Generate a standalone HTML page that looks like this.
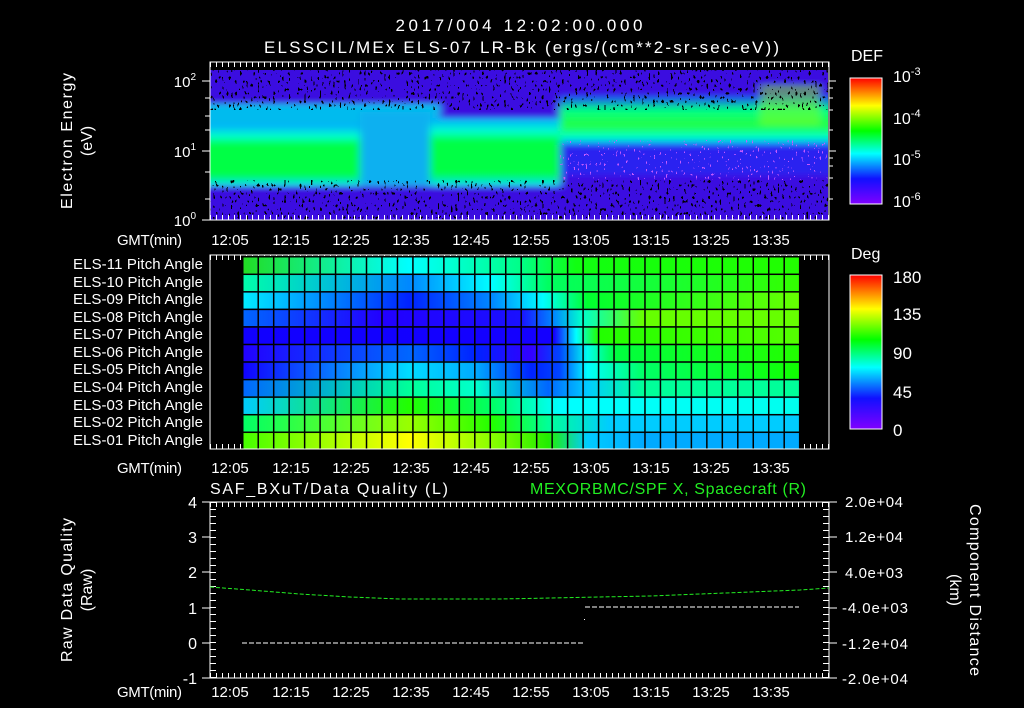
<!DOCTYPE html>
<html><head><meta charset="utf-8"><style>
html,body{margin:0;padding:0;background:#000;}
svg{display:block;font-family:"Liberation Sans",sans-serif;}
text{fill:#fff;}
</style></head><body>
<svg width="1024" height="708" viewBox="0 0 1024 708" xmlns="http://www.w3.org/2000/svg" font-size="15">
<defs>
<clipPath id="spc"><rect x="210" y="70" width="618" height="150"/></clipPath>
<filter id="bl" x="-5%" y="-5%" width="110%" height="110%"><feGaussianBlur stdDeviation="4 3"/></filter>
<filter id="spk" x="0" y="0" width="100%" height="100%">
<feTurbulence type="fractalNoise" baseFrequency="0.45 0.25" numOctaves="1" seed="3"/>
<feColorMatrix type="matrix" values="0 0 0 0 0  0 0 0 0 0  0 0 0 0 0  1.6 0 0 0 -0.55"/>
<feComponentTransfer><feFuncA type="discrete" tableValues="0 1"/></feComponentTransfer>
</filter>
<filter id="spk2" x="0" y="0" width="100%" height="100%">
<feTurbulence type="fractalNoise" baseFrequency="0.5 0.3" numOctaves="1" seed="9"/>
<feColorMatrix type="matrix" values="0 0 0 0 0.55  0 0 0 0 0.1  0 0 0 0 1  1.6 0 0 0 -0.6"/>
<feComponentTransfer><feFuncA type="discrete" tableValues="0 1"/></feComponentTransfer>
</filter>
<linearGradient id="cb1" x1="0" y1="1" x2="0" y2="0">
<stop offset="0" stop-color="#8000ff"/><stop offset="0.2" stop-color="#1010ff"/><stop offset="0.4" stop-color="#00ffff"/><stop offset="0.58" stop-color="#00ff00"/><stop offset="0.78" stop-color="#ffff00"/><stop offset="1" stop-color="#ff0000"/>
</linearGradient>
<linearGradient id="sbL" x1="0" y1="0" x2="0" y2="1">
<stop offset="0" stop-color="#00aaff"/><stop offset="0.2" stop-color="#00ffcc"/><stop offset="0.35" stop-color="#00ff44"/><stop offset="0.8" stop-color="#00ff44"/><stop offset="1" stop-color="#00ddff"/>
</linearGradient>
<linearGradient id="sbR" x1="0" y1="0" x2="0" y2="1">
<stop offset="0" stop-color="#2030ff"/><stop offset="0.3" stop-color="#00ff88"/><stop offset="0.6" stop-color="#22ff44"/><stop offset="0.85" stop-color="#00ffcc"/><stop offset="1" stop-color="#0080ff"/>
</linearGradient>
<pattern id="grid" x="242" y="256" width="15.47" height="17.55" patternUnits="userSpaceOnUse"><rect width="1.5" height="17.55" fill="#000"/><rect width="15.47" height="1.5" fill="#000"/></pattern>
<linearGradient id="r11"><stop offset="0" stop-color="#22dd22"/><stop offset="0.3" stop-color="#00ffff"/><stop offset="0.5" stop-color="#00ff88"/><stop offset="0.6" stop-color="#11ff11"/><stop offset="1" stop-color="#22ff00"/></linearGradient>
<linearGradient id="r10"><stop offset="0" stop-color="#00ffaa"/><stop offset="0.3" stop-color="#0088ff"/><stop offset="0.45" stop-color="#00ffff"/><stop offset="0.55" stop-color="#00ff60"/><stop offset="1" stop-color="#33ff00"/></linearGradient>
<linearGradient id="r9"><stop offset="0" stop-color="#00eeff"/><stop offset="0.3" stop-color="#0022ff"/><stop offset="0.45" stop-color="#0088ff"/><stop offset="0.54" stop-color="#00ffff"/><stop offset="0.62" stop-color="#00ff30"/><stop offset="1" stop-color="#66ff00"/></linearGradient>
<linearGradient id="r8"><stop offset="0" stop-color="#0066ff"/><stop offset="0.25" stop-color="#2200ff"/><stop offset="0.5" stop-color="#1a10ff"/><stop offset="0.56" stop-color="#0088ff"/><stop offset="0.61" stop-color="#00ffcc"/><stop offset="0.72" stop-color="#66ff00"/><stop offset="1" stop-color="#66ff00"/></linearGradient>
<linearGradient id="r7"><stop offset="0" stop-color="#1100ff"/><stop offset="0.56" stop-color="#1400ff"/><stop offset="0.6" stop-color="#00ffff"/><stop offset="0.64" stop-color="#22ff00"/><stop offset="1" stop-color="#55ff00"/></linearGradient>
<linearGradient id="r6"><stop offset="0" stop-color="#2200ff"/><stop offset="0.3" stop-color="#0066ff"/><stop offset="0.42" stop-color="#0022ff"/><stop offset="0.52" stop-color="#3300ff"/><stop offset="0.57" stop-color="#0044ff"/><stop offset="0.62" stop-color="#00ffee"/><stop offset="0.67" stop-color="#00ff40"/><stop offset="1" stop-color="#22ff00"/></linearGradient>
<linearGradient id="r5"><stop offset="0" stop-color="#1100ff"/><stop offset="0.3" stop-color="#00ddff"/><stop offset="0.42" stop-color="#00aaff"/><stop offset="0.52" stop-color="#0022ff"/><stop offset="0.57" stop-color="#0044ff"/><stop offset="0.62" stop-color="#00ffff"/><stop offset="0.72" stop-color="#00ff66"/><stop offset="1" stop-color="#11ff00"/></linearGradient>
<linearGradient id="r4"><stop offset="0" stop-color="#0066ff"/><stop offset="0.3" stop-color="#00ff99"/><stop offset="0.42" stop-color="#00ffcc"/><stop offset="0.55" stop-color="#0066ff"/><stop offset="0.62" stop-color="#00ccff"/><stop offset="0.72" stop-color="#00ff99"/><stop offset="1" stop-color="#00ff99"/></linearGradient>
<linearGradient id="r3"><stop offset="0" stop-color="#00ccff"/><stop offset="0.3" stop-color="#22ff00"/><stop offset="0.45" stop-color="#00ff66"/><stop offset="0.57" stop-color="#00ffff"/><stop offset="1" stop-color="#00ffee"/></linearGradient>
<linearGradient id="r2"><stop offset="0" stop-color="#00ff66"/><stop offset="0.3" stop-color="#99ff00"/><stop offset="0.45" stop-color="#22ff00"/><stop offset="0.55" stop-color="#00ff99"/><stop offset="0.66" stop-color="#00ccff"/><stop offset="1" stop-color="#00ccff"/></linearGradient>
<linearGradient id="r1"><stop offset="0" stop-color="#44ff00"/><stop offset="0.3" stop-color="#ffff00"/><stop offset="0.45" stop-color="#88ff00"/><stop offset="0.55" stop-color="#22ee00"/><stop offset="0.62" stop-color="#00ccff"/><stop offset="0.72" stop-color="#00aaff"/><stop offset="1" stop-color="#00aaff"/></linearGradient>
</defs>

<!-- titles -->
<text x="519" y="31" text-anchor="middle" font-size="17" textLength="247" lengthAdjust="spacing">2017/004 12:02:00.000</text>
<text x="264" y="53" font-size="17" textLength="515" lengthAdjust="spacing">ELSSCIL/MEx ELS-07 LR-Bk  (ergs/(cm**2-sr-sec-eV))</text>

<!-- spectrogram -->
<g clip-path="url(#spc)">
<g filter="url(#bl)">
<rect x="200" y="60" width="640" height="170" fill="#3a10e0"/>
<rect x="200" y="104" width="240" height="22" fill="#00bbee"/>
<rect x="200" y="124" width="160" height="62" fill="url(#sbL)"/>
<rect x="360" y="112" width="70" height="74" fill="#10b0f0"/>
<rect x="430" y="118" width="130" height="68" fill="url(#sbL)"/>
<rect x="560" y="95" width="280" height="50" fill="url(#sbR)"/>
<rect x="560" y="145" width="280" height="30" fill="#2a20f0"/>
<rect x="760" y="85" width="60" height="40" fill="#88ff20" opacity="0.5"/>
</g>
</g>
<rect x="210" y="70" width="618" height="40" filter="url(#spk)"/>
<rect x="210" y="180" width="618" height="40" filter="url(#spk)"/>
<rect x="560" y="140" width="268" height="40" filter="url(#spk2)"/>
<rect x="210" y="62" width="619" height="8" fill="#000"/>
<rect x="210" y="62" width="619" height="158" fill="none" stroke="#fff"/>
<g stroke="#fff">
<line x1="210" y1="64.5" x2="829" y2="64.5" stroke-width="5" stroke-dasharray="1,5"/>
<line x1="210" y1="217.5" x2="829" y2="217.5" stroke-width="5" stroke-dasharray="1,5"/>
<line x1="210" y1="257.5" x2="829" y2="257.5" stroke-width="5" stroke-dasharray="1,5"/>
<line x1="210" y1="446.5" x2="829" y2="446.5" stroke-width="5" stroke-dasharray="1,5"/>
<line x1="210" y1="504.5" x2="829" y2="504.5" stroke-width="5" stroke-dasharray="1,5"/>
<line x1="210" y1="675.5" x2="829" y2="675.5" stroke-width="5" stroke-dasharray="1,5"/>
</g>
<g stroke="#fff"><line x1="202" y1="81" x2="210" y2="81"/><line x1="202" y1="151" x2="210" y2="151"/><line x1="202" y1="220" x2="210" y2="220"/>
<line x1="205" y1="98" x2="210" y2="98"/><line x1="205" y1="116" x2="210" y2="116"/><line x1="205" y1="130" x2="210" y2="130"/><line x1="205" y1="172" x2="210" y2="172"/><line x1="205" y1="199" x2="210" y2="199"/>
<line x1="829" y1="81" x2="836" y2="81"/><line x1="829" y1="88" x2="833" y2="88"/><line x1="829" y1="98" x2="833" y2="98"/><line x1="829" y1="110" x2="833" y2="110"/><line x1="829" y1="130" x2="833" y2="130"/><line x1="829" y1="151" x2="836" y2="151"/><line x1="829" y1="158" x2="833" y2="158"/><line x1="829" y1="166" x2="833" y2="166"/><line x1="829" y1="178" x2="833" y2="178"/><line x1="829" y1="199" x2="833" y2="199"/></g>
<text x="196" y="87" text-anchor="end">10<tspan dy="-7" font-size="10">2</tspan></text>
<text x="196" y="157" text-anchor="end">10<tspan dy="-7" font-size="10">1</tspan></text>
<text x="196" y="226" text-anchor="end">10<tspan dy="-7" font-size="10">0</tspan></text>
<text transform="translate(72,141) rotate(-90)" text-anchor="middle" font-size="16" textLength="136" lengthAdjust="spacing">Electron Energy</text>
<text transform="translate(92,141) rotate(-90)" text-anchor="middle" font-size="16">(eV)</text>

<!-- colorbar 1 -->
<text x="851" y="61" font-size="16">DEF</text>
<rect x="850" y="78" width="32" height="126" fill="url(#cb1)" stroke="#fff"/>
<text x="893" y="82" font-size="16">10<tspan dy="-7" font-size="11">-3</tspan></text>
<text x="893" y="124" font-size="16">10<tspan dy="-7" font-size="11">-4</tspan></text>
<text x="893" y="165" font-size="16">10<tspan dy="-7" font-size="11">-5</tspan></text>
<text x="893" y="207" font-size="16">10<tspan dy="-7" font-size="11">-6</tspan></text>

<!-- time labels -->
<g>
<text x="117" y="245" textLength="65" lengthAdjust="spacing">GMT(min)</text>
<text x="117" y="473" textLength="65" lengthAdjust="spacing">GMT(min)</text>
<text x="117" y="697" textLength="65" lengthAdjust="spacing">GMT(min)</text>
</g>
<g text-anchor="middle">
<text x="230" y="245">12:05</text><text x="291" y="245">12:15</text><text x="351" y="245">12:25</text><text x="411" y="245">12:35</text><text x="471" y="245">12:45</text><text x="531" y="245">12:55</text><text x="591" y="245">13:05</text><text x="651" y="245">13:15</text><text x="711" y="245">13:25</text><text x="771" y="245">13:35</text>
<text x="230" y="473">12:05</text><text x="291" y="473">12:15</text><text x="351" y="473">12:25</text><text x="411" y="473">12:35</text><text x="471" y="473">12:45</text><text x="531" y="473">12:55</text><text x="591" y="473">13:05</text><text x="651" y="473">13:15</text><text x="711" y="473">13:25</text><text x="771" y="473">13:35</text>
<text x="230" y="697">12:05</text><text x="291" y="697">12:15</text><text x="351" y="697">12:25</text><text x="411" y="697">12:35</text><text x="471" y="697">12:45</text><text x="531" y="697">12:55</text><text x="591" y="697">13:05</text><text x="651" y="697">13:15</text><text x="711" y="697">13:25</text><text x="771" y="697">13:35</text>
</g>

<!-- pitch panel -->
<g>
<rect x="242" y="256.0" width="557" height="17.6" fill="url(#r11)"/>
<rect x="242" y="273.5" width="557" height="17.6" fill="url(#r10)"/>
<rect x="242" y="291.1" width="557" height="17.6" fill="url(#r9)"/>
<rect x="242" y="308.6" width="557" height="17.6" fill="url(#r8)"/>
<rect x="242" y="326.2" width="557" height="17.6" fill="url(#r7)"/>
<rect x="242" y="343.7" width="557" height="17.6" fill="url(#r6)"/>
<rect x="242" y="361.3" width="557" height="17.6" fill="url(#r5)"/>
<rect x="242" y="378.8" width="557" height="17.6" fill="url(#r4)"/>
<rect x="242" y="396.4" width="557" height="17.6" fill="url(#r3)"/>
<rect x="242" y="413.9" width="557" height="17.6" fill="url(#r2)"/>
<rect x="242" y="431.5" width="557" height="17.5" fill="url(#r1)"/>
<rect x="242" y="256" width="558" height="193" fill="url(#grid)"/>
</g>
<rect x="210" y="255" width="619" height="194" fill="none" stroke="#fff"/>
<g stroke="#fff">
<line x1="210" y1="257.5" x2="242" y2="257.5" stroke-width="5" stroke-dasharray="1,5"/>
<line x1="210" y1="446.5" x2="242" y2="446.5" stroke-width="5" stroke-dasharray="1,5"/>
</g>
<g text-anchor="end">
<text x="203" y="269" textLength="130" lengthAdjust="spacing">ELS-11 Pitch Angle</text>
<text x="203" y="287" textLength="130" lengthAdjust="spacing">ELS-10 Pitch Angle</text>
<text x="203" y="304" textLength="130" lengthAdjust="spacing">ELS-09 Pitch Angle</text>
<text x="203" y="322" textLength="130" lengthAdjust="spacing">ELS-08 Pitch Angle</text>
<text x="203" y="339" textLength="130" lengthAdjust="spacing">ELS-07 Pitch Angle</text>
<text x="203" y="357" textLength="130" lengthAdjust="spacing">ELS-06 Pitch Angle</text>
<text x="203" y="374" textLength="130" lengthAdjust="spacing">ELS-05 Pitch Angle</text>
<text x="203" y="392" textLength="130" lengthAdjust="spacing">ELS-04 Pitch Angle</text>
<text x="203" y="410" textLength="130" lengthAdjust="spacing">ELS-03 Pitch Angle</text>
<text x="203" y="427" textLength="130" lengthAdjust="spacing">ELS-02 Pitch Angle</text>
<text x="203" y="445" textLength="130" lengthAdjust="spacing">ELS-01 Pitch Angle</text>
</g>

<!-- colorbar 2 -->
<text x="851" y="259" font-size="16">Deg</text>
<rect x="850" y="275" width="32" height="154" fill="url(#cb1)" stroke="#fff"/>
<g font-size="17"><text x="893" y="283">180</text><text x="893" y="320">135</text><text x="893" y="359">90</text><text x="893" y="398">45</text><text x="893" y="436">0</text></g>

<!-- bottom panel -->
<text x="210" y="494" font-size="16" textLength="238" lengthAdjust="spacing">SAF_BXuT/Data Quality (L)</text>
<text x="530" y="494" font-size="16" style="fill:#22ee22" textLength="276" lengthAdjust="spacing">MEXORBMC/SPF X, Spacecraft (R)</text>
<rect x="210" y="502" width="619" height="176" fill="none" stroke="#fff"/>
<g stroke="#fff">
<line x1="202" y1="502" x2="210" y2="502"/><line x1="202" y1="537" x2="210" y2="537"/><line x1="202" y1="572" x2="210" y2="572"/><line x1="202" y1="608" x2="210" y2="608"/><line x1="202" y1="643" x2="210" y2="643"/><line x1="202" y1="678" x2="210" y2="678"/>
<line x1="829" y1="502" x2="837" y2="502"/><line x1="829" y1="537" x2="837" y2="537"/><line x1="829" y1="572" x2="837" y2="572"/><line x1="829" y1="608" x2="837" y2="608"/><line x1="829" y1="643" x2="837" y2="643"/><line x1="829" y1="678" x2="837" y2="678"/>
<line x1="213" y1="502" x2="213" y2="678" stroke-width="6" stroke-dasharray="1,6"/>
<line x1="826" y1="502" x2="826" y2="678" stroke-width="6" stroke-dasharray="1,6"/>
</g>
<g stroke="#fff" stroke-dasharray="5,2" stroke-width="1">
<line x1="242" y1="643" x2="584" y2="643"/>
<line x1="585" y1="607" x2="799" y2="607"/>
</g>
<rect x="584" y="619" width="1" height="1" fill="#fff"/>
<polyline fill="none" stroke="#22ee22" stroke-dasharray="4,2" points="210,587 250,590 300,594 350,597 400,599 450,599 500,599 550,598 600,597 650,596 700,594 750,592 800,590 829,588"/>
<g text-anchor="end" font-size="16">
<text x="197" y="508">4</text><text x="197" y="543">3</text><text x="197" y="578">2</text><text x="197" y="614">1</text><text x="197" y="649">0</text><text x="197" y="684">-1</text>
</g>
<g font-size="15">
<text x="845" y="507" textLength="58" lengthAdjust="spacing">2.0e+04</text><text x="845" y="542" textLength="58" lengthAdjust="spacing">1.2e+04</text><text x="845" y="578" textLength="58" lengthAdjust="spacing">4.0e+03</text><text x="842" y="613" textLength="66" lengthAdjust="spacing">-4.0e+03</text><text x="842" y="649" textLength="66" lengthAdjust="spacing">-1.2e+04</text><text x="842" y="684" textLength="66" lengthAdjust="spacing">-2.0e+04</text>
</g>
<text transform="translate(72,590) rotate(-90)" text-anchor="middle" font-size="16" textLength="144" lengthAdjust="spacing">Raw Data Quality</text>
<text transform="translate(92,590) rotate(-90)" text-anchor="middle" font-size="16">(Raw)</text>
<text transform="translate(970,590) rotate(90)" text-anchor="middle" font-size="16" textLength="172" lengthAdjust="spacing">Component Distance</text>
<text transform="translate(950,590) rotate(90)" text-anchor="middle" font-size="16">(km)</text>
</svg>
</body></html>
